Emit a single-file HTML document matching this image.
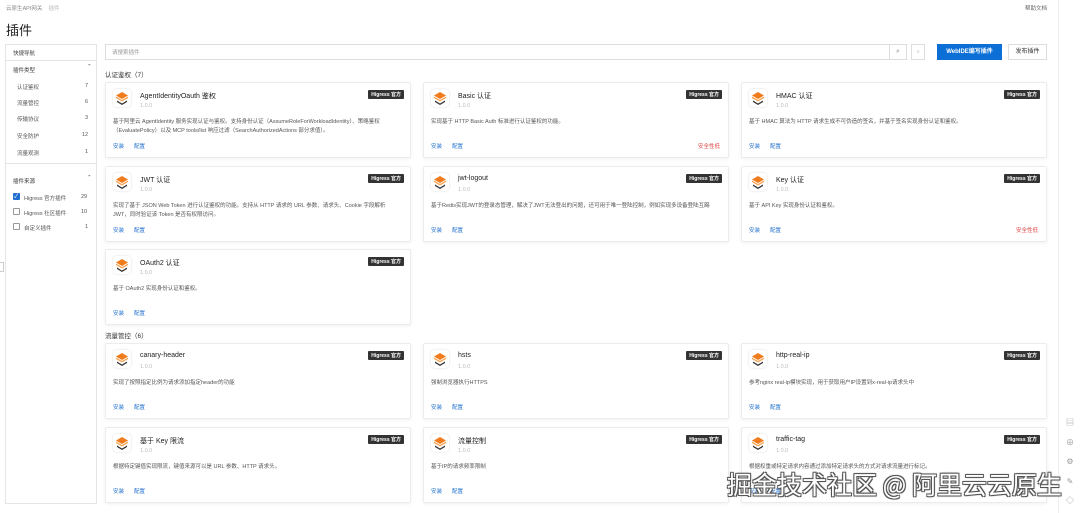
<!DOCTYPE html>
<html><head><meta charset="utf-8"><style>
*{box-sizing:border-box;margin:0;padding:0}
body{width:1080px;height:513px;overflow:hidden;background:#fff;font-family:"Liberation Sans","Noto Sans CJK SC",sans-serif;color:#333;position:relative}
.a{position:absolute;white-space:nowrap}
.card{position:absolute;width:306px;height:76px;background:#fff;border:1px solid #ececec;box-shadow:0 1px 3px rgba(0,0,0,.06);border-radius:2px}
.card .ic{position:absolute;left:7px;top:6px;width:18px;height:18px;border-radius:4px;background:#fff;box-shadow:0 0 2px rgba(0,0,0,.15)}
.card .t{position:absolute;left:34px;top:8px;font-size:7px;color:#222}
.card .v{position:absolute;left:34px;top:20px;font-size:5.5px;color:#bbb}
.card .d{position:absolute;left:7px;top:35px;width:290px;font-size:5.5px;line-height:8.5px;color:#555;white-space:normal}
.card .l{position:absolute;left:7px;top:59px;font-size:5.5px;color:#1f6fce}
.card .l span{margin-right:10px}
.card .b{position:absolute;right:6px;top:7px;background:#333;color:#fff;font-size:5px;padding:1px 3px;border-radius:1px;font-weight:bold}
.card .r{position:absolute;right:8px;top:59px;font-size:5.5px;color:#d44}
.side{font-size:5.5px;color:#555}
.cb{position:absolute;width:7px;height:7px;border:1px solid #999;border-radius:1px;background:#fff}
</style></head><body>
<div class="a side" style="left:6px;top:4px;color:#888">云原生API网关 &nbsp;&nbsp; <span style="color:#bbb">插件</span></div>
<div class="a" style="left:1025px;top:4px;font-size:5.5px;color:#666">帮助文档</div>
<div class="a" style="left:6px;top:20px;font-size:13px;color:#222">插件</div>
<div class="a" style="left:1058px;top:0;width:1px;height:513px;background:#eee"></div>

<div class="a" style="left:5px;top:44px;width:92px;height:460px;border:1px solid #e5e5e5"></div>
<div class="a side" style="left:13px;top:49px;color:#444">快捷导航</div>
<div class="a" style="left:5px;top:60px;width:92px;height:1px;background:#e5e5e5"></div>
<div class="a side" style="left:13px;top:66px;color:#333">插件类型</div><div class="a side" style="left:87px;top:64px">⌃</div>
<div class="a side" style="left:17px;top:83px">认证鉴权</div><div class="a side" style="left:85px;top:83px">7</div>
<div class="a side" style="left:17px;top:99px">流量管控</div><div class="a side" style="left:85px;top:99px">6</div>
<div class="a side" style="left:17px;top:115px">传输协议</div><div class="a side" style="left:85px;top:115px">3</div>
<div class="a side" style="left:17px;top:132px">安全防护</div><div class="a side" style="left:82px;top:132px">12</div>
<div class="a side" style="left:17px;top:149px">流量观测</div><div class="a side" style="left:85px;top:149px">1</div>
<div class="a" style="left:5px;top:163px;width:92px;height:1px;background:#e5e5e5"></div>
<div class="a side" style="left:13px;top:177px;color:#333">插件来源</div><div class="a side" style="left:87px;top:175px">⌃</div>
<div class="cb" style="left:13px;top:193px;background:#1f6fce;border-color:#1f6fce"></div><div class="a" style="left:14px;top:191px;font-size:6px;color:#fff">✓</div>
<div class="a side" style="left:24px;top:194px">Higress 官方插件</div><div class="a side" style="left:81px;top:194px">29</div>
<div class="cb" style="left:13px;top:208px"></div><div class="a side" style="left:24px;top:209px">Higress 社区插件</div><div class="a side" style="left:81px;top:209px">10</div>
<div class="cb" style="left:13px;top:223px"></div><div class="a side" style="left:24px;top:224px">自定义插件</div><div class="a side" style="left:85px;top:224px">1</div>

<div class="a" style="left:105px;top:44px;width:785px;height:16px;border:1px solid #ddd"></div>
<div class="a side" style="left:112px;top:48px;color:#999">请搜索插件</div>
<div class="a" style="left:889px;top:44px;width:18px;height:16px;border:1px solid #ddd;font-size:7px;color:#888;text-align:center;line-height:14px">⌕</div>
<div class="a" style="left:911px;top:44px;width:14px;height:16px;border:1px solid #ddd;font-size:5px;color:#888;text-align:center;line-height:14px">○</div>
<div class="a" style="left:937px;top:44px;width:65px;height:16px;background:#0b6fd6;color:#fff;font-size:6px;text-align:center;line-height:16px;font-weight:bold">WebIDE编写插件</div>
<div class="a" style="left:1008px;top:44px;width:39px;height:16px;border:1px solid #ddd;font-size:6px;text-align:center;line-height:14px;color:#333">发布插件</div>

<div class="a" style="left:105px;top:69px;font-size:6.5px;color:#333">认证鉴权（7）</div>
<div class="a" style="left:105px;top:330px;font-size:6.5px;color:#333">流量管控（6）</div>

<svg width="0" height="0" style="position:absolute"><defs><g id="lg"><path d="M9 3 L15 6.5 L9 10 L3 6.5Z" fill="#f07c1e"/><path d="M3 7.5 L9 11 L15 7.5 L15 9 L9 12.5 L3 9Z" fill="#f6a14e"/><path d="M4 11.5 L9 14.5 L14 11.5 L14 13 L9 16 L4 13Z" fill="#333"/></g></defs></svg>

<div class="card" style="left:105px;top:82px"><div class="ic"><svg width="18" height="18"><use href="#lg"/></svg></div><div class="t">AgentIdentityOauth 鉴权</div><div class="v">1.0.0</div><div class="d">基于阿里云 AgentIdentity 服务实现认证与鉴权。支持身份认证（AssumeRoleForWorkloadIdentity）、策略鉴权（EvaluatePolicy）以及 MCP tools/list 响应过滤（SearchAuthorizedActions 部分求值）。</div><div class="l"><span>安装</span><span>配置</span></div><div class="b">Higress 官方</div></div>
<div class="card" style="left:423px;top:82px"><div class="ic"><svg width="18" height="18"><use href="#lg"/></svg></div><div class="t">Basic 认证</div><div class="v">1.0.0</div><div class="d">实现基于 HTTP Basic Auth 标准进行认证鉴权的功能。</div><div class="l"><span>安装</span><span>配置</span></div><div class="b">Higress 官方</div><div class="r">安全性低</div></div>
<div class="card" style="left:741px;top:82px"><div class="ic"><svg width="18" height="18"><use href="#lg"/></svg></div><div class="t">HMAC 认证</div><div class="v">1.0.0</div><div class="d">基于 HMAC 算法为 HTTP 请求生成不可伪造的签名，并基于签名实现身份认证和鉴权。</div><div class="l"><span>安装</span><span>配置</span></div><div class="b">Higress 官方</div></div>

<div class="card" style="left:105px;top:166px"><div class="ic"><svg width="18" height="18"><use href="#lg"/></svg></div><div class="t">JWT 认证</div><div class="v">1.0.0</div><div class="d">实现了基于 JSON Web Token 进行认证鉴权的功能。支持从 HTTP 请求的 URL 参数、请求头、Cookie 字段解析 JWT，同时验证该 Token 是否有权限访问。</div><div class="l"><span>安装</span><span>配置</span></div><div class="b">Higress 官方</div></div>
<div class="card" style="left:423px;top:166px"><div class="ic"><svg width="18" height="18"><use href="#lg"/></svg></div><div class="t">jwt-logout</div><div class="v">1.0.0</div><div class="d">基于Redis实现JWT的登录态管理，解决了JWT无法登出的问题，还可用于唯一登陆控制，例如实现多设备登陆互踢</div><div class="l"><span>安装</span><span>配置</span></div><div class="b">Higress 官方</div></div>
<div class="card" style="left:741px;top:166px"><div class="ic"><svg width="18" height="18"><use href="#lg"/></svg></div><div class="t">Key 认证</div><div class="v">1.0.0</div><div class="d">基于 API Key 实现身份认证和鉴权。</div><div class="l"><span>安装</span><span>配置</span></div><div class="b">Higress 官方</div><div class="r">安全性低</div></div>

<div class="card" style="left:105px;top:249px"><div class="ic"><svg width="18" height="18"><use href="#lg"/></svg></div><div class="t">OAuth2 认证</div><div class="v">1.0.0</div><div class="d">基于 OAuth2 实现身份认证和鉴权。</div><div class="l"><span>安装</span><span>配置</span></div><div class="b">Higress 官方</div></div>

<div class="card" style="left:105px;top:343px"><div class="ic"><svg width="18" height="18"><use href="#lg"/></svg></div><div class="t">canary-header</div><div class="v">1.0.0</div><div class="d">实现了按照指定比例为请求添加指定header的功能</div><div class="l"><span>安装</span><span>配置</span></div><div class="b">Higress 官方</div></div>
<div class="card" style="left:423px;top:343px"><div class="ic"><svg width="18" height="18"><use href="#lg"/></svg></div><div class="t">hsts</div><div class="v">1.0.0</div><div class="d">强制浏览器执行HTTPS</div><div class="l"><span>安装</span><span>配置</span></div><div class="b">Higress 官方</div></div>
<div class="card" style="left:741px;top:343px"><div class="ic"><svg width="18" height="18"><use href="#lg"/></svg></div><div class="t">http-real-ip</div><div class="v">1.0.0</div><div class="d">参考nginx real-ip模块实现，用于获取用户IP设置到x-real-ip请求头中</div><div class="l"><span>安装</span><span>配置</span></div><div class="b">Higress 官方</div></div>

<div class="card" style="left:105px;top:427px"><div class="ic"><svg width="18" height="18"><use href="#lg"/></svg></div><div class="t">基于 Key 限流</div><div class="v">1.0.0</div><div class="d">根据特定键值实现限流，键值来源可以是 URL 参数、HTTP 请求头。</div><div class="l"><span>安装</span><span>配置</span></div><div class="b">Higress 官方</div></div>
<div class="card" style="left:423px;top:427px"><div class="ic"><svg width="18" height="18"><use href="#lg"/></svg></div><div class="t">流量控制</div><div class="v">1.0.0</div><div class="d">基于IP的请求频率限制</div><div class="l"><span>安装</span><span>配置</span></div><div class="b">Higress 官方</div></div>
<div class="card" style="left:741px;top:427px"><div class="ic"><svg width="18" height="18"><use href="#lg"/></svg></div><div class="t">traffic-tag</div><div class="v">1.0.0</div><div class="d">根据权重或特定请求内容通过添加特定请求头的方式对请求流量进行标记。</div><div class="l"><span>安装</span><span>配置</span></div><div class="b">Higress 官方</div></div>

<div class="a" style="left:1065px;top:413px;font-size:8px;color:#999;line-height:19.5px;text-align:center;width:10px;white-space:normal">▤<br>⊕<br>⚙<br>✎<br>◇</div>
<div class="a" style="left:0;top:262px;width:4px;height:10px;border:1px solid #ccc;border-left:none"></div>

<div class="a" style="left:727px;top:466px;font-size:25px;color:#fff;font-family:'Noto Sans CJK SC',sans-serif;text-shadow:-1px -1px 0 #555,1px -1px 0 #555,-1px 1px 0 #555,1px 1px 0 #555,0 0 2px #333">掘金技术社区 @ 阿里云云原生</div>
</body></html>
